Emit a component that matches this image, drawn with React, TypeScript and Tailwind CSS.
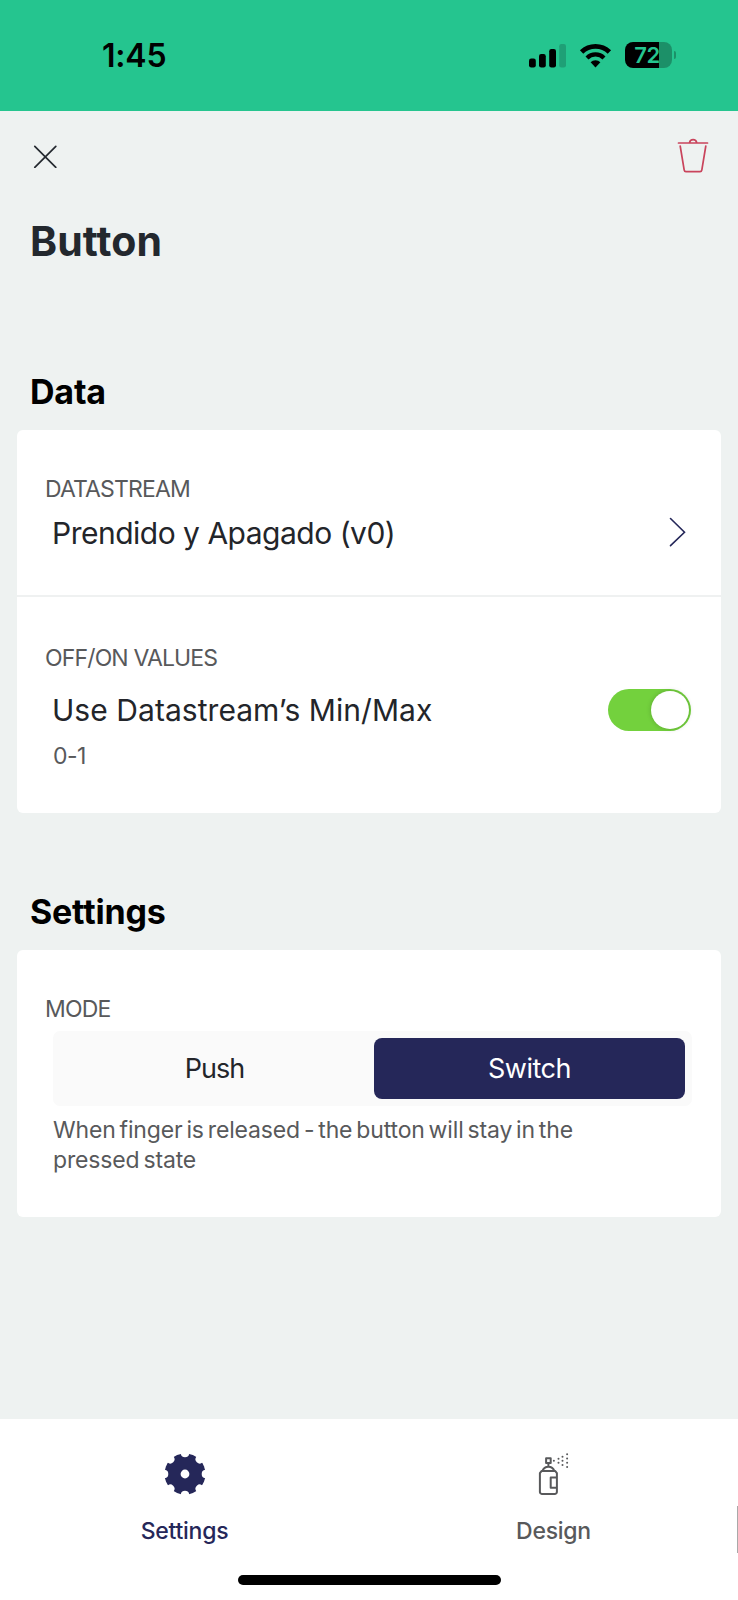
import type { ReactNode } from "react";

function StatusBar() {
  return (
    <header className="flex h-[111px] shrink-0 items-start bg-[#25c58f] pl-[102px] pr-[62px] pt-[36px] text-black">
      <div className="text-[32px] font-semibold leading-[40px] tracking-[-0.2px]">1:45</div>
      <div className="ml-auto flex h-[38px] items-center">
        <svg className="mt-[2px] h-[24px] w-[37px]" viewBox="0 0 37 24">
          <rect x="0" y="14.500" width="6.800" height="9" rx="2.200" />
          <rect x="10" y="10" width="6.800" height="13.500" rx="2.200" />
          <rect x="20.200" y="5" width="6.800" height="18.500" rx="2.200" />
          <rect x="30.200" y="0" width="6.800" height="23.500" rx="2.200" fill="#1fa076" />
        </svg>
        <svg className="ml-[13px] h-[25px] w-[33px]" viewBox="0 0 33 25">
          <path d="M2.600 9a20 20 0 0 1 27.800 0" fill="none" stroke="#000" strokeWidth="4.800" />
          <path d="M8 14.900a12 12 0 0 1 17 0" fill="none" stroke="#000" strokeWidth="4.200" />
          <path d="M16.500 24.500l-4.900-5.200a6.800 6.800 0 0 1 9.800 0z" />
        </svg>
        <div className="ml-[13px] flex h-[26px] w-[47px] items-center justify-center rounded-[8px] bg-[linear-gradient(90deg,#000_0_34px,#1c9068_34px)] pr-[3px] text-[22px] font-semibold leading-[26px] tracking-[-0.5px] text-[#25c58f]">
          72
        </div>
        <div className="ml-[2px] h-[8px] w-[2px] rounded-r-full bg-[#1c9068]" />
      </div>
    </header>
  );
}

function CloseIcon() {
  return (
    <svg className="h-[24px] w-[24px]" viewBox="0 0 24 24" fill="none" stroke="#24292f" strokeWidth="1.7" strokeLinecap="round">
      <path d="M1.800 2.300l21 21M22.800 2.300l-21 21" />
    </svg>
  );
}

function TrashIcon() {
  return (
    <svg className="h-[36px] w-[32px]" viewBox="0 0 32 36" fill="none" stroke="#c9445c" strokeWidth="1.7" strokeLinecap="round" strokeLinejoin="round">
      <path d="M1.500 5h29M12.500 4.600c.4-2 1.800-3 3.600-3s3.200 1 3.600 3" />
      <path d="M3.200 8l4 24.200a1.800 1.800 0 0 0 1.800 1.500h14a1.800 1.800 0 0 0 1.800-1.500L28.800 8" />
    </svg>
  );
}

function GearIcon() {
  const notches = [0, 45, 90, 135, 180, 225, 270, 315];
  return (
    <svg className="h-[42px] w-[42px]" viewBox="-21 -21 42 42">
      <circle r="20.500" fill="#252759" />
      {notches.map((a) => (
        <path
          key={a}
          transform={`rotate(${a})`}
          d="M-4.600-22L-4-19.400Q-3.400-16.700 0-16.700T4-19.400L4.600-22z"
          fill="#fff"
        />
      ))}
      <circle r="4.400" fill="#fff" />
    </svg>
  );
}

const sprayDots = [
  [16.6, 8.7],
  [21.2, 6.7], [21.2, 10.7],
  [25.2, 4.7], [25.2, 8.7], [25.2, 13],
  [29.8, 2.3], [29.8, 6.4], [29.8, 10.7], [29.8, 15],
];

function SprayIcon() {
  return (
    <svg className="h-[44px] w-[32px]" viewBox="0.700 0 32 44" fill="none" stroke="#58595b" strokeWidth="2" strokeLinejoin="round">
      <rect x="8.800" y="6.300" width="4.600" height="4.800" />
      <path d="M11.100 11v3.800M5.200 18.900c.9-2.700 3-4.200 5.900-4.200s5 1.500 5.900 4.200" />
      <path d="M4.400 18.900h13.400l1.800 2.300v18.900a1.800 1.800 0 0 1-1.800 1.800H4.400a1.800 1.800 0 0 1-1.800-1.800V21.200z" />
      <path d="M19.600 25.500h-6.200v10.200h6.200" />
      {sprayDots.map(([x, y]) => (
        <circle key={`${x}-${y}`} cx={x} cy={y} r="1" fill="#58595b" stroke="none" />
      ))}
    </svg>
  );
}

function Label({ children }: { children: ReactNode }) {
  return <div className="text-[23px] leading-[30px] tracking-[-0.850px] text-[#58595b]">{children}</div>;
}

function SectionTitle({ children }: { children: ReactNode }) {
  return <h2 className="pl-[30px] text-[34px] font-bold leading-[44px] tracking-[-0.200px] text-black">{children}</h2>;
}

export default function App() {
  return (
    <div className="flex h-[1600px] w-[738px] flex-col overflow-hidden bg-[#eef2f1] font-['Inter','Liberation_Sans',sans-serif]">
      <StatusBar />

      <div className="flex h-[92px] shrink-0 items-start justify-between pl-[33px] pr-[29px] pt-[27px]">
        <button className="mt-[6px]" aria-label="Close"><CloseIcon /></button>
        <button aria-label="Delete"><TrashIcon /></button>
      </div>

      <main className="flex grow flex-col">
        <h1 className="mt-[13px] pl-[30px] text-[41px] font-bold leading-[50px] tracking-[0.100px] text-[#23282e]">Button</h1>

        <section className="mt-[104px]">
          <SectionTitle>Data</SectionTitle>
          <div className="mx-[17px] mt-[16px] rounded-[6px] bg-white">
            <div className="flex h-[167px] items-center border-b-2 border-[#eff1f1] pl-[28px] pr-[35px]">
              <div className="grow pt-px">
                <Label>DATASTREAM</Label>
                <div className="mt-[9px] pl-[7px] text-[30px] leading-[40px] tracking-[-0.500px] text-[#23252a]">Prendido y Apagado (v0)</div>
              </div>
              <svg className="mt-[39px] h-[30px] w-[17px]" viewBox="0 0 17 30" fill="none" stroke="#252759" strokeWidth="1.600" strokeLinecap="round">
                <path d="M1.500 1.500L15.500 15.300L1.500 28.700" />
              </svg>
            </div>
            <div className="h-[216px] pl-[28px] pr-[30px] pt-[46px]">
              <Label>OFF/ON VALUES</Label>
              <div className="mt-[16px] flex h-[42px] items-center justify-between pl-[7px]">
                <div className="text-[30px] leading-[42px] tracking-[0.050px] text-[#23252a]">Use Datastream’s Min/Max</div>
                <div className="flex h-[42px] w-[83px] items-center justify-end rounded-full bg-[#73d13d] pr-[2px]">
                  <div className="h-[38px] w-[38px] rounded-full bg-white shadow-[0_0_5px_rgba(0,0,0,0.2)]" />
                </div>
              </div>
              <div className="mt-[10px] pl-[8px] text-[23px] leading-[30px] tracking-[-0.600px] text-[#58595b]">0-1</div>
            </div>
          </div>
        </section>

        <section className="mt-[77px]">
          <SectionTitle>Settings</SectionTitle>
          <div className="mx-[17px] mt-[16px] h-[267px] rounded-[6px] bg-white pl-[28px] pr-[29px] pt-[44px]">
            <Label>MODE</Label>
            <div className="ml-[8px] mt-[7px] grid h-[75px] grid-cols-2 gap-[3px] rounded-[7px] bg-[#fafafa] p-[7px] text-[27px]">
              <button className="pr-[2px] pt-[2px] tracking-[-1px] text-[#23252a]">Push</button>
              <button className="rounded-[8px] bg-[#252759] pt-[2px] tracking-[-0.500px] text-white">Switch</button>
            </div>
            <p className="ml-[8px] mt-[9px] w-[560px] text-[23px] leading-[30px] tracking-[-0.150px] text-[#58595b] [word-spacing:-2.400px]">
              When finger is released - the button will stay in the pressed state
            </p>
          </div>
        </section>
      </main>

      <nav className="relative grid h-[181px] shrink-0 grid-cols-2 bg-white text-[23px] font-medium leading-[30px] tracking-[-0.250px]">
        <div className="flex flex-col items-center pt-[34px] text-[#252759]">
          <GearIcon />
          <div className="mt-[21px]">Settings</div>
        </div>
        <div className="flex flex-col items-center pt-[33px] text-[#58595b]">
          <SprayIcon />
          <div className="mt-[20px]">Design</div>
        </div>
        <div className="absolute bottom-[15px] left-[238px] h-[10px] w-[263px] rounded-full bg-black" />
        <div className="absolute right-0 top-[87px] h-[47px] w-px bg-[#a9a9a9]" />
      </nav>
    </div>
  );
}
